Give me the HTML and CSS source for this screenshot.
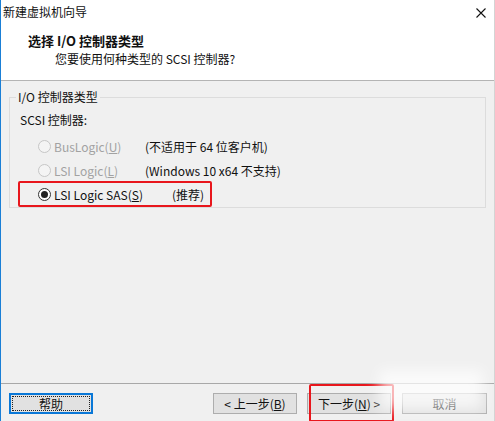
FILE: index.html
```html
<!DOCTYPE html>
<html lang="zh-CN">
<head>
    <meta charset="UTF-8">
    <title>新建虚拟机向导</title>
    <link rel="stylesheet" href="styles.css">
</head>
<body>
    <div class="window">
        <div class="titlebar">
            <span class="title">新建虚拟机向导</span>
            <svg class="close" width="10" height="10" viewBox="0 0 10 10">
                <path d="M0.5 0.5 L9.5 9.5 M9.5 0.5 L0.5 9.5" stroke="#111" stroke-width="1.1"/>
            </svg>
        </div>

        <!-- Wizard header -->
        <div class="header">
            <h1>选择 I/O 控制器类型</h1>
            <p>您要使用何种类型的 SCSI 控制器?</p>
        </div>

        <div class="content">
            <fieldset class="group">
                <legend>I/O 控制器类型</legend>
                <div class="group-label">SCSI 控制器:</div>

                <div class="radio-row disabled">
                    <span class="radio"></span>
                    <span class="radio-text">BusLogic(<u>U</u>)</span>
                    <span class="note">(不适用于 64 位客户机)</span>
                </div>
                <div class="radio-row disabled">
                    <span class="radio"></span>
                    <span class="radio-text">LSI Logic(<u>L</u>)</span>
                    <span class="note">(Windows 10 x64 不支持)</span>
                </div>
                <div class="radio-row">
                    <span class="radio checked"></span>
                    <span class="radio-text wide">LSI Logic SAS(<u>S</u>)</span>
                    <span class="note">(推荐)</span>
                </div>
            </fieldset>
        </div>

        <div class="footer">
            <button class="btn focused"><span>帮助</span></button>
            <button class="btn push-right">&lt; 上一步(<u>B</u>)</button>
            <button class="btn">下一步(<u>N</u>) &gt;</button>
            <button class="btn cancel">取消</button>
        </div>

        <!-- annotation marks -->
        <div class="mark mark-radio"></div>
        <div class="mark mark-next"></div>
        <div class="watermark"></div>
    </div>
</body>
</html>
```

FILE: styles.css
```css
body {
    margin: 0;
    font-family: "Noto Sans CJK SC", "Noto Sans", sans-serif;
    font-size: 12px;
    color: #111;
}
.window {
    position: relative;
    width: 495px;
    height: 421px;
    box-sizing: border-box;
    border-left: 1px solid #1a7fd6;
    border-right: 1px solid #d4d4d4;
    background-color: #f0f0f0;
    display: flex;
    flex-direction: column;
    overflow: hidden;
}
.titlebar {
    height: 24px;
    background-color: white;
    display: flex;
    align-items: center;
    justify-content: space-between;
    padding: 0 8px 0 2px;
}
.title {
    line-height: 16px;
}
.close {
    margin-top: 1px;
}
.header {
    height: 57px;
    background-color: white;
    border-bottom: 1px solid #b4b4b4;
    padding: 8px 0 0 27px;
    box-sizing: border-box;
}
.header h1 {
    margin: 0;
    font-size: 13px;
    font-weight: bold;
    line-height: 18px;
}
.header p {
    margin: 0 0 0 27px;
    line-height: 18px;
}
.content {
    flex: 1;
    padding: 8px 8px 0 8px;
}
.group {
    margin: 0;
    padding: 7px 10px 1px 10px;
    border: 1px solid #dcdcdc;
    min-inline-size: 0;
}
.group legend {
    padding: 0 2px;
    margin-left: -4px;
    line-height: 16px;
}
.group-label {
    line-height: 16px;
    margin-bottom: 6px;
}
.radio-row {
    height: 24px;
    display: flex;
    align-items: center;
    padding-left: 18px;
}
.radio {
    width: 11px;
    height: 11px;
    border: 1px solid #333;
    border-radius: 50%;
    background-color: white;
    display: flex;
    align-items: center;
    justify-content: center;
}
.radio.checked::after {
    content: "";
    width: 7px;
    height: 7px;
    border-radius: 50%;
    background-color: #222;
}
.radio-text {
    margin-left: 3px;
    width: 91px;
}
.radio-text.wide {
    width: 118px;
}
.disabled .radio {
    border-color: #c6c6c6;
    background-color: #f4f4f4;
}
.disabled .radio-text {
    color: #a2a2a2;
}
.note {
    color: #111;
}
.footer {
    height: 38px;
    border-top: 1px solid #a8a8a8;
    display: flex;
    align-items: flex-start;
    padding: 9px 7px 0 8px;
    box-sizing: border-box;
}
.btn {
    width: 84px;
    height: 21px;
    margin-left: 10px;
    padding: 0;
    border: 1px solid #adadad;
    background-color: #e1e1e1;
    font-family: inherit;
    font-size: 12px;
    color: #111;
    line-height: 17px;
}
.btn:first-child {
    margin-left: 0;
}
.btn.focused {
    border: 2px solid #0a78d7;
    padding: 1px;
}
.btn.focused span {
    display: block;
    height: 13px;
    line-height: 13px;
    border: 1px dotted #222;
}
.push-right {
    margin-left: auto;
}
.btn.cancel {
    width: 85px;
    margin-left: 11px;
}
.mark {
    position: absolute;
    border: 2px solid #e8161c;
    border-radius: 2px;
}
.mark-radio {
    left: 17px;
    top: 181px;
    width: 190px;
    height: 22px;
}
.mark-next {
    left: 308px;
    top: 384px;
    width: 81px;
    height: 34px;
}
.watermark {
    position: absolute;
    left: 378px;
    top: 370px;
    width: 104px;
    height: 40px;
    background-color: rgba(255, 255, 255, 0.7);
    filter: blur(7px);
}
```
